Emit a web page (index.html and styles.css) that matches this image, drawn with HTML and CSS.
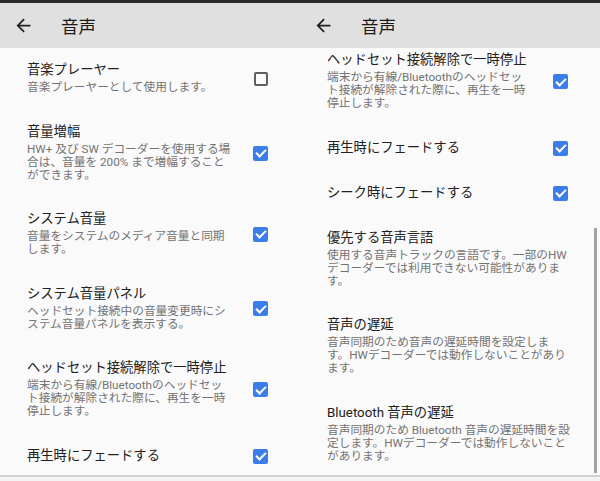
FILE: index.html
```html
<!DOCTYPE html>
<html lang="ja">
<head>
  <meta charset="UTF-8" />
  <title>音声</title>
  <link rel="stylesheet" href="styles.css">
</head>
<body>
<div class="shots">

  <section class="phone">
    <header class="bar">
      <svg class="back" viewBox="0 0 24 24"><path d="M20 11H7.83l5.59-5.59L12 4l-8 8 8 8 1.41-1.41L7.83 13H20v-2z"/></svg>
      <h1>音声</h1>
    </header>
    <div class="list">
      <div class="pref">
        <div class="text">
          <div class="title">音楽プレーヤー</div>
          <div class="summary">音楽プレーヤーとして使用します。</div>
        </div>
        <span class="check"></span>
      </div>
      <div class="pref">
        <div class="text">
          <div class="title">音量増幅</div>
          <div class="summary">HW+ 及び SW デコーダーを使用する場合は、音量を 200% まで増幅することができます。</div>
        </div>
        <span class="check on"></span>
      </div>
      <div class="pref">
        <div class="text">
          <div class="title">システム音量</div>
          <div class="summary">音量をシステムのメディア音量と同期します。</div>
        </div>
        <span class="check on"></span>
      </div>
      <div class="pref">
        <div class="text">
          <div class="title">システム音量パネル</div>
          <div class="summary">ヘッドセット接続中の音量変更時にシステム音量パネルを表示する。</div>
        </div>
        <span class="check on"></span>
      </div>
      <div class="pref">
        <div class="text">
          <div class="title">ヘッドセット接続解除で一時停止</div>
          <div class="summary">端末から有線/Bluetoothのヘッドセット接続が解除された際に、再生を一時停止します。</div>
        </div>
        <span class="check on"></span>
      </div>
      <div class="pref plain">
        <div class="text">
          <div class="title">再生時にフェードする</div>
        </div>
        <span class="check on"></span>
      </div>
    </div>
  </section>

  <section class="phone">
    <header class="bar">
      <svg class="back" viewBox="0 0 24 24"><path d="M20 11H7.83l5.59-5.59L12 4l-8 8 8 8 1.41-1.41L7.83 13H20v-2z"/></svg>
      <h1>音声</h1>
    </header>
    <div class="list">
      <div class="scrolled">
        <div class="pref">
          <div class="text">
            <div class="title">ヘッドセット接続解除で一時停止</div>
            <div class="summary">端末から有線/Bluetoothのヘッドセット接続が解除された際に、再生を一時停止します。</div>
          </div>
          <span class="check on"></span>
        </div>
        <div class="pref plain">
          <div class="text">
            <div class="title">再生時にフェードする</div>
          </div>
          <span class="check on"></span>
        </div>
        <div class="pref plain">
          <div class="text">
            <div class="title">シーク時にフェードする</div>
          </div>
          <span class="check on"></span>
        </div>
        <div class="pref">
          <div class="text wide">
            <div class="title">優先する音声言語</div>
            <div class="summary">使用する音声トラックの言語です。一部のHWデコーダーでは利用できない可能性があります。</div>
          </div>
        </div>
        <div class="pref">
          <div class="text wide">
            <div class="title">音声の遅延</div>
            <div class="summary">音声同期のため音声の遅延時間を設定します。HWデコーダーでは動作しないことがあります。</div>
          </div>
        </div>
        <div class="pref">
          <div class="text wide">
            <div class="title">Bluetooth 音声の遅延</div>
            <div class="summary">音声同期のため Bluetooth 音声の遅延時間を設定します。HWデコーダーでは動作しないことがあります。</div>
          </div>
        </div>
      </div>
      <div class="scrollbar"></div>
    </div>
  </section>

</div>
</body>
</html>
```

FILE: styles.css
```css
html, body {
  margin: 0;
  padding: 0;
  background: #f3f3f3;
  font-family: Roboto, "Noto Sans CJK JP", sans-serif;
  color: #212121;
}

.shots {
  display: flex;
  width: 600px;
  height: 481px;
  border-top: 3px solid #2b2b2b;
  box-sizing: border-box;
}

.phone {
  width: 300px;
  display: flex;
  flex-direction: column;
}

.bar {
  height: 45px;
  flex: none;
  background: #e0e0e0;
  display: flex;
  align-items: center;
  padding-left: 13px;
}

.back {
  width: 21px;
  height: 21px;
  fill: #222;
}

.bar h1 {
  margin: 0 0 0 27px;
  font-size: 17.5px;
  font-weight: normal;
  color: #1a1a1a;
}

.list {
  height: 427px;
  flex: none;
  background: #fafafa;
  border-bottom: 2px solid #d2d2d2;
  overflow: hidden;
  position: relative;
}

.scrolled {
  margin-top: -10px;
}

.pref {
  display: flex;
  align-items: center;
  padding: 12px 30px 12px 27px;
}

.pref.plain {
  padding-top: 12.5px;
  padding-bottom: 12.5px;
}

.text {
  width: 205px;
}

.text.wide {
  width: 243px;
}

.title {
  font-size: 13.3px;
  line-height: 20px;
  color: #202020;
}

.summary {
  font-size: 11.7px;
  line-height: 13px;
  margin: 1px 0 3.5px;
  color: #737373;
}

.check {
  margin-left: auto;
  margin-right: 2px;
  width: 14px;
  height: 14px;
  border: 2px solid #5f5f5f;
  border-radius: 2px;
  box-sizing: border-box;
  position: relative;
}

.check.on {
  width: 15px;
  height: 15px;
  border: none;
  background: #3b7ee9;
}

.check.on::after {
  content: "";
  position: absolute;
  left: 5px;
  top: 1.5px;
  width: 4px;
  height: 8px;
  border: solid #fff;
  border-width: 0 2.2px 2.2px 0;
  transform: rotate(45deg);
}

.scrollbar {
  position: absolute;
  right: 3px;
  top: 180px;
  width: 3px;
  height: 245px;
  background: #a3a3a3;
}
```
